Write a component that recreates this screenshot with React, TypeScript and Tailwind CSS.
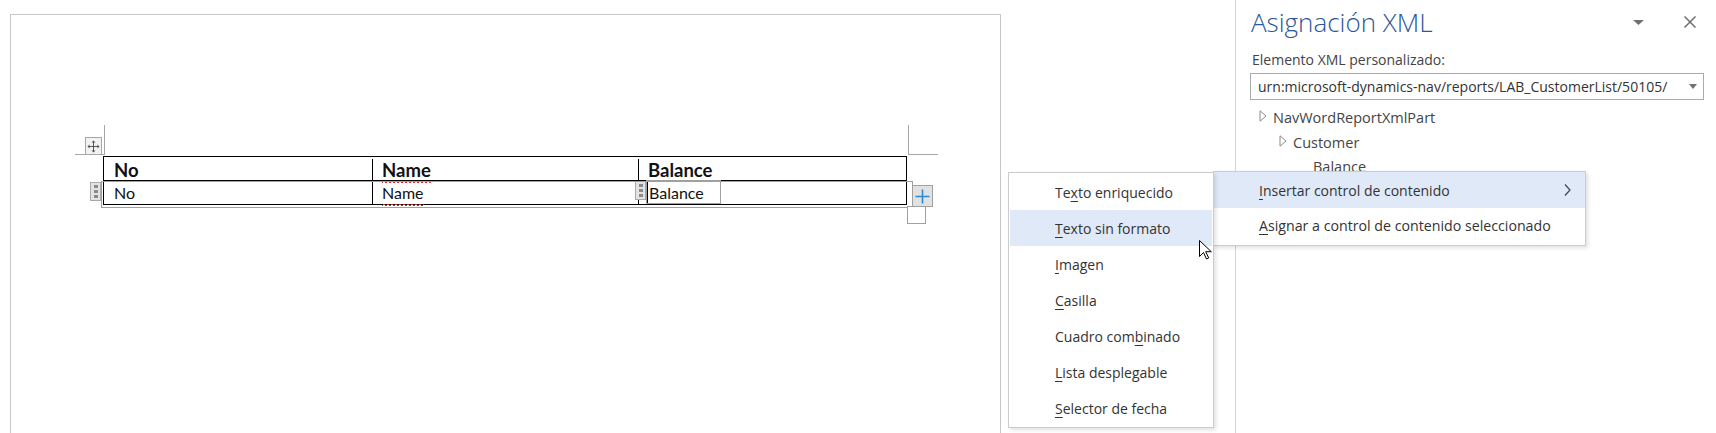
import React from 'react';

const ui = { fontFamily: '"Open Sans", "Noto Sans", sans-serif' };
const doc = { fontFamily: 'Lato, "Liberation Sans", sans-serif' };

function MoveIcon() {
  return (
    <svg width="13" height="13" viewBox="0 0 13 13" fill="none">
      <path d="M6.5 1v11M1 6.5h11" stroke="#555" strokeWidth="1" />
      <path d="M6.5 0.5l-2 2h4zM6.5 12.5l-2-2h4zM0.5 6.5l2-2v4zM12.5 6.5l-2-2v4z" fill="#555" />
    </svg>
  );
}

function Grip() {
  return (
    <div className="flex h-full w-full flex-col items-center justify-center gap-[2px] border border-[#a9a9a9] bg-[#e3e3e3]">
      <div className="h-[3px] w-[4px] bg-[#8a8a8a]" />
      <div className="h-[3px] w-[4px] bg-[#8a8a8a]" />
      <div className="h-[3px] w-[4px] bg-[#8a8a8a]" />
    </div>
  );
}

function Tri({ left }: { left: number }) {
  return (
    <svg width="8" height="12" viewBox="0 0 8 12" style={{ marginLeft: left }} className="mb-[4px] shrink-0">
      <path d="M1 0.8v10.4L7 6z" fill="none" stroke="#8a8a8a" strokeWidth="1" />
    </svg>
  );
}

function Acc({ children }: { children: React.ReactNode }) {
  return <span className="underline underline-offset-[3px] decoration-1">{children}</span>;
}

// spell-check squiggle under a word
function Squiggle({ children }: { children: React.ReactNode }) {
  return (
    <span className="relative inline-block">
      {children}
      <svg className="absolute bottom-[-3px] left-0" width="100%" height="4" preserveAspectRatio="none">
        <defs>
          <pattern id="sq" width="4" height="4" patternUnits="userSpaceOnUse">
            <path d="M0 3L2 1L4 3" fill="none" stroke="#e0201c" strokeWidth="1" />
          </pattern>
        </defs>
        <rect width="100%" height="4" fill="url(#sq)" />
      </svg>
    </span>
  );
}

function Cursor() {
  return (
    <svg width="13" height="20" viewBox="0 0 13 20">
      <path d="M0.5 0.5v16l4-4 3 6.5 2.2-1-3-6.3h5.6z" fill="#fff" stroke="#000" strokeWidth="1" strokeLinejoin="round" />
    </svg>
  );
}

export default function App() {
  const menu1: React.ReactNode[] = [
    <>Te<Acc>x</Acc>to enriquecido</>,
    <><Acc>T</Acc>exto sin formato</>,
    <><Acc>I</Acc>magen</>,
    <><Acc>C</Acc>asilla</>,
    <>Cuadro com<Acc>b</Acc>inado</>,
    <><Acc>L</Acc>ista desplegable</>,
    <><Acc>S</Acc>elector de fecha</>,
  ];

  return (
    <div className="relative flex h-[433px] w-[1716px] overflow-hidden bg-white">
      {/* document area */}
      <div className="w-[1235px] shrink-0 pl-[10px] pt-[14px]">
        <div className="h-full w-[991px] border-l border-r border-t border-[#c6c6c6] pt-[110px]">
          <div className="relative ml-[92px] w-[804px] pt-[31px]" style={doc}>
            {/* corner marks */}
            <div className="absolute left-[1px] top-0 h-[30px] w-px bg-[#a6a6a6]" />
            <div className="absolute left-[-28px] top-[29px] h-px w-[29px] bg-[#a6a6a6]" />
            <div className="absolute left-[805px] top-0 h-[30px] w-px bg-[#a6a6a6]" />
            <div className="absolute left-[805px] top-[29px] h-px w-[30px] bg-[#a6a6a6]" />
            {/* move handle */}
            <div className="absolute left-[-18px] top-[12px] flex h-[18px] w-[17px] items-center justify-center border border-[#a6a6a6] bg-[#f2f2f2]">
              <MoveIcon />
            </div>

            {/* table */}
            <div className="border border-black text-[#111]">
              <div className="flex h-[24px] border-b border-black pt-[2px] text-[18.5px] font-bold leading-[22px]">
                <div className="w-[269px] border-r border-black pl-[10px]">No</div>
                <div className="w-[266px] border-r border-black pl-[9px]">
                  <Squiggle>Name</Squiggle>
                </div>
                <div className="flex-1 pl-[9px]">Balance</div>
              </div>
              <div className="flex h-[23px] text-[16px] leading-[23px]">
                <div className="w-[269px] border-r border-black pl-[10px]">No</div>
                <div className="w-[266px] border-r border-black pl-[9px]">
                  <Squiggle>Name</Squiggle>
                </div>
                <div className="relative flex-1 pl-[10px]">
                  Balance
                  <div className="absolute left-[7px] top-[-1px] h-[24px] w-[75px] border border-[#a0a0a0]" />
                  <div className="absolute left-[8px] top-0 h-[22px] w-px bg-black" />
                  <div className="absolute left-[-4px] top-0 h-[19px] w-[11px]">
                    <Grip />
                  </div>
                </div>
              </div>
            </div>

            {/* repeating control outline and handles */}
            <div className="pointer-events-none absolute left-[-2px] top-[56px] h-[27px] w-[812px] border border-[#a0a0a0]" />
            <div className="absolute left-[-13px] top-[57px] h-[19px] w-[11px]">
              <Grip />
            </div>
            <div className="absolute left-[809px] top-[60px] flex h-[22px] w-[21px] items-center justify-center border border-[#a0a0a0] bg-[#e1e1e1]">
              <svg width="15" height="15" viewBox="0 0 15 15">
                <path d="M7.5 0.5v14M0.5 7.5h14" stroke="#2a8ad4" strokeWidth="1.6" />
              </svg>
            </div>
            <div className="absolute left-[804px] top-[81px] h-[18px] w-[19px] border border-[#a0a0a0] bg-white" />
          </div>
        </div>
      </div>

      {/* XML mapping pane */}
      <div className="flex-1 border-l border-[#d4d4d4] text-[#444]" style={ui}>
        <div className="flex h-[42px] items-center pl-[15px] pr-[20px] pt-[2px]">
          <div className="flex-1 text-[26px] font-light text-[#2b579a]">Asignación XML</div>
          <svg width="11" height="5" viewBox="0 0 11 5" className="mr-[40px]">
            <path d="M0 0h11L5.5 5z" fill="#707070" />
          </svg>
          <svg width="12" height="12" viewBox="0 0 12 12">
            <path d="M0.5 0.5l11 11M11.5 0.5l-11 11" stroke="#6d6d6d" strokeWidth="1.5" />
          </svg>
        </div>
        <div className="pl-[16px] pt-[8px] text-[14px] leading-[20px]">Elemento XML personalizado:</div>
        <div className="ml-[14px] mt-[3px] flex h-[27px] w-[454px] items-center border border-[#ababab] pl-[7px] pr-[6px] text-[14px] text-[#333]">
          <div className="flex-1 whitespace-nowrap">urn:microsoft-dynamics-nav/reports/LAB_CustomerList/50105/</div>
          <svg width="8" height="5" viewBox="0 0 8 5">
            <path d="M0 0h8L4 5z" fill="#707070" />
          </svg>
        </div>
        <div className="mt-[5px] text-[14.5px]">
          <div className="flex h-[25px] items-center">
            <Tri left={23} />
            <span className="ml-[6px]">NavWordReportXmlPart</span>
          </div>
          <div className="flex h-[25px] items-center">
            <Tri left={43} />
            <span className="ml-[6px]">Customer</span>
          </div>
          <div className="flex h-[23px] items-center pl-[77px]">Balance</div>
        </div>
      </div>

      {/* submenu (behind) */}
      <div
        className="absolute left-[1213px] top-[171px] w-[373px] border border-[#cccccc] bg-white pb-[1px] text-[14px] text-[#333] shadow-[2px_2px_4px_rgba(0,0,0,0.12)]"
        style={ui}
      >
        <div className="flex h-[36px] items-center bg-[#e0e9f7] pl-[45px] pr-[14px]">
          <span className="flex-1">
            <Acc>I</Acc>nsertar control de contenido
          </span>
          <svg width="7" height="12" viewBox="0 0 7 12">
            <path d="M1 0.5l5 5.5-5 5.5" fill="none" stroke="#444" strokeWidth="1.2" />
          </svg>
        </div>
        <div className="flex h-[36px] items-center pl-[45px] text-[14.2px]">
          <span>
            <Acc>A</Acc>signar a control de contenido seleccionado
          </span>
        </div>
      </div>

      {/* content control menu */}
      <div
        className="absolute left-[1008px] top-[172px] w-[206px] border border-[#cccccc] bg-white px-[1px] pb-[1px] pt-[1px] text-[14px] text-[#333] shadow-[2px_2px_4px_rgba(0,0,0,0.12)]"
        style={ui}
      >
        {menu1.map((m, i) => (
          <div key={i} className={`flex h-[36px] items-center pl-[45px] ${i === 1 ? 'bg-[#e0e9f7]' : ''}`}>
            {m}
          </div>
        ))}
      </div>

      <div className="absolute left-[1199px] top-[240px]">
        <Cursor />
      </div>
    </div>
  );
}
